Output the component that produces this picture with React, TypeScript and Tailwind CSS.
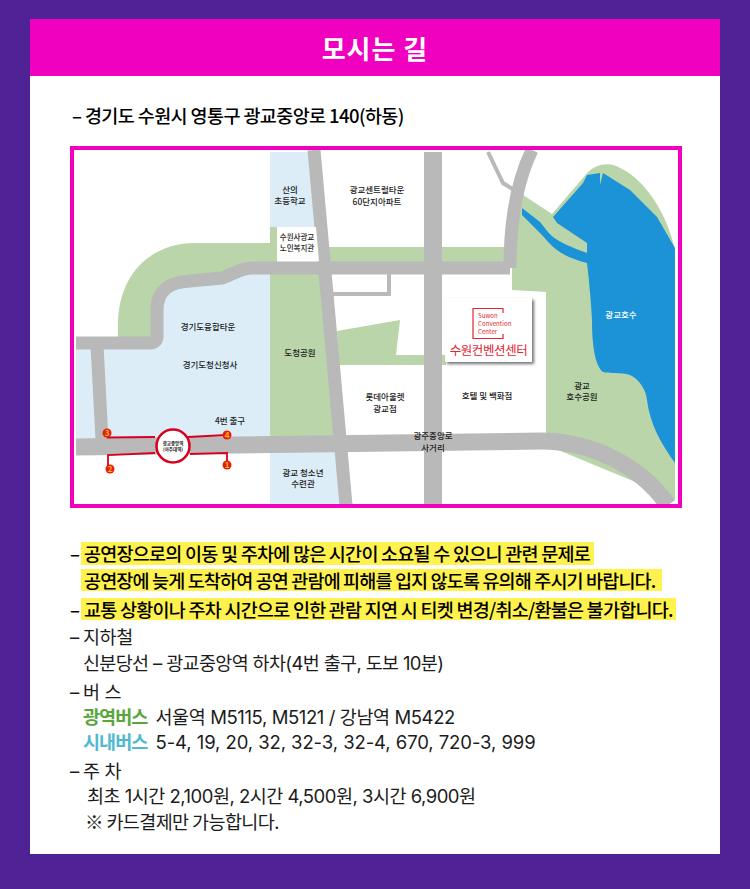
const FONT = { fontFamily: '"Noto Sans CJK KR", "Noto Sans", sans-serif' };
const FONT_LATIN = { fontFamily: 'Inter, "Noto Sans CJK KR", sans-serif' };

const ROAD = "#b9b9b9";
const GREEN = "#b9d5a9";
const SKY = "#dcedf8";
const RED = "#d8001f";

type Label = { x: number; y: number; t: string; size?: number; fill?: string };

const labels: Label[] = [
  { x: 290, y: 193, t: "산의" },
  { x: 290, y: 204, t: "초등학교" },
  { x: 297, y: 240, t: "수원사광교", size: 7.5 },
  { x: 297, y: 251, t: "노인복지관", size: 7.5 },
  { x: 377, y: 193, t: "광교센트럴타운" },
  { x: 377, y: 205, t: "60단지아파트" },
  { x: 208, y: 330, t: "경기도융합타운" },
  { x: 210, y: 368, t: "경기도청신청사" },
  { x: 300, y: 356, t: "도청공원" },
  { x: 230, y: 424, t: "4번 출구" },
  { x: 303, y: 476, t: "광교 청소년" },
  { x: 303, y: 487, t: "수련관" },
  { x: 385, y: 400, t: "롯데아울렛" },
  { x: 385, y: 412, t: "광교점" },
  { x: 487, y: 399, t: "호텔 및 백화점" },
  { x: 433, y: 439, t: "광주중앙로" },
  { x: 433, y: 451, t: "사거리" },
  { x: 582, y: 389, t: "광교" },
  { x: 582, y: 400, t: "호수공원" },
  { x: 621, y: 318, t: "광교호수", fill: "#ffffff" },
];

const exits = [
  { n: "1", x: 227, y: 465 },
  { n: "2", x: 110, y: 469 },
  { n: "3", x: 107, y: 433 },
  { n: "4", x: 227, y: 435 },
];

function RouteMap() {
  return (
    <svg width="612" height="362" viewBox="70 146 612 362" className="block" style={FONT}>
      <defs>
        <filter id="card" x="-10%" y="-10%" width="125%" height="125%">
          <feDropShadow dx="2" dy="2" stdDeviation="1.5" floodColor="#000000" floodOpacity="0.55" />
        </filter>
      </defs>
      <rect x="70" y="146" width="612" height="362" fill="#ffffff" />

      {/* sky blue lots */}
      <rect x="270" y="152" width="46" height="78" fill={SKY} />
      <path d="M76 342 L76 442 L270 438 L270 268 L253 270 L223 283 L177 285 L157 300 L157 342 Z" fill={SKY} />
      <rect x="270" y="450" width="70" height="54" fill={SKY} />

      {/* green areas */}
      <path d="M270 227 L277 227 L277 265 L255 265 L223 275 L190 278 Q160 280 157 310 L157 338 L118 338 L118 325 C118 275 150 243 195 243 L270 243 Z" fill={GREEN} />
      <path d="M270 268 L325 268 L342 438 L270 438 Z" fill={GREEN} />
      <rect x="328" y="247" width="182" height="16" fill={GREEN} />
      <path d="M337 331 L400 320 L396 355 L446 355 L446 365 L339 365 Z" fill={GREEN} />
      <path d="M523 195 L552 214 L588 172 C595 165 610 160 622 169 C645 180 668 215 675 250 L675 500 L650 488 L546 445 L546 292 L512 290 L512 265 C512 235 515 212 523 195 Z" fill={GREEN} />

      {/* lake */}
      <path d="M553 217 L583 183 L587 175 L600 173 L600 185 L603 173 L630 190 L657 217 L675 248 L675 463 C662 445 650 425 647 400 C646 390 640 380 630 375 C620 372 610 374 603 372 C595 366 592 345 592 320 C591 300 589 280 587 263 C575 260 565 256 557 250 C550 245 545 238 540 233 L522 215 L522 208 L540 222 C545 228 548 233 553 237 C560 242 570 247 587 253 L587 243 L557 223 Z" fill="#1b93d6" />

      {/* roads */}
      <g fill="none" stroke={ROAD}>
        <path d="M510 268 L253 268 C240 268 232 275 222 278 L190 281 C170 282 157 290 157 310 L157 336 Q157 343 150 343 L76 343" strokeWidth="13" />
        <path d="M510 268 C510 225 515 185 532 150" strokeWidth="13" />
        <path d="M97 345 L102 440" strokeWidth="13" />
        <path d="M314 150 L346 505" strokeWidth="13" />
        <path d="M433 152 L433 504" strokeWidth="18" />
        <path d="M76 447 L540 441 C590 441 640 465 668 505" strokeWidth="17" />
        <path d="M333 294 L389 294 L389 272" strokeWidth="4" />
        <path d="M488 152 L503 183 L514 190" strokeWidth="4" />
      </g>

      {/* white lot under nursing centre label */}
      <path d="M277 227 L316 227 L319 261 L277 261 Z" fill="#ffffff" />

      {/* convention center */}
      <rect x="445" y="298" width="87" height="64" fill="#ffffff" filter="url(#card)" />
      <path d="M503 313 L503 308.5 L473 308.5 L473 338.5 L503 338.5 L503 334" fill="none" stroke="#e1232e" strokeWidth="1.2" />
      <g fill="#e1232e" fontSize="6" letterSpacing="0.1">
        <text x="478" y="318">Suwon</text>
        <text x="478" y="326">Convention</text>
        <text x="478" y="334">Center</text>
      </g>
      <text x="488.5" y="355" textAnchor="middle" fontSize="12.5" fill="#e1232e" letterSpacing="-0.4">수원컨벤션센터</text>

      {/* subway exits */}
      <g fill="none" stroke={RED} strokeWidth="1.8">
        <path d="M107 437.5 L155 437" />
        <path d="M188 437 L227 435" />
        <path d="M108 468 L108 455 L155 453" />
        <path d="M190 454 L227 453 L227 465" />
      </g>
      <circle cx="173" cy="446" r="16.5" fill="#ffffff" stroke={RED} strokeWidth="2.5" />
      <text x="173" y="445" textAnchor="middle" fontSize="4.5" fontWeight="700" fill="#222222">광교중앙역</text>
      <text x="173" y="451" textAnchor="middle" fontSize="4.5" fontWeight="700" fill="#222222">(아주대역)</text>
      {exits.map((e) => (
        <g key={e.n}>
          <circle cx={e.x} cy={e.y} r="4.5" fill="#e3200f" />
          <text x={e.x} y={e.y + 3} textAnchor="middle" fontSize="8" fontWeight="700" fill="#ffb020">{e.n}</text>
        </g>
      ))}

      {labels.map((l) => (
        <text
          key={l.t}
          x={l.x}
          y={l.y}
          textAnchor="middle"
          fontSize={l.size ?? 8.5}
          fontWeight="500"
          fill={l.fill ?? "#222222"}
        >
          {l.t}
        </text>
      ))}

      <rect x="72" y="148" width="608" height="358" fill="none" stroke="#f000bf" strokeWidth="4" />
    </svg>
  );
}

function Highlight({ children, className }: { children: string; className: string }) {
  return <div className={`bg-[#fff24f] pl-[3px] whitespace-nowrap ${className}`}>{children}</div>;
}

export default function App() {
  return (
    <div className="w-[750px] h-[889px] bg-[#4f2296] pt-[19px] px-[30px] overflow-hidden" style={FONT}>
      <div className="w-[690px] h-[835px] bg-white text-[#1c1c1c]">
        {/* Header */}
        <div className="h-[57px] bg-[#f000bf] flex items-center justify-center">
          <h1 className="text-[26px] font-bold text-white tracking-[1px]">모시는 길</h1>
        </div>

        <div className="pl-10 pt-[26px]">
          {/* Address */}
          <p className="h-[26px] leading-[26px] text-[18.5px] font-medium tracking-[-0.6px] text-black whitespace-nowrap pl-[2px]">
            – 경기도 수원시 영통구 광교중앙로 140(하동)
          </p>

          <div className="mt-[18px]">
            <RouteMap />
          </div>

          {/* Notices */}
          <div className="mt-[34px] text-[18.5px] leading-[23px] font-medium tracking-[-0.75px] text-black">
            <div className="flex">
              <span className="w-[11px]">–</span>
              <div className="flex flex-col gap-[4px]">
                <Highlight className="w-[513px] h-[23px]">공연장으로의 이동 및 주차에 많은 시간이 소요될 수 있으니 관련 문제로</Highlight>
                <Highlight className="w-[581px] h-[22px] tracking-[-0.85px]">공연장에 늦게 도착하여 공연 관람에 피해를 입지 않도록 유의해 주시기 바랍니다.</Highlight>
              </div>
            </div>
            <div className="flex mt-[7px]">
              <span className="w-[11px]">–</span>
              <Highlight className="w-[595px] h-[22px]">교통 상황이나 주차 시간으로 인한 관람 지연 시 티켓 변경/취소/환불은 불가합니다.</Highlight>
            </div>
          </div>

          {/* Directions */}
          <div className="mt-[4px] text-[18.5px] tracking-[-0.4px] text-[#1c1c1c] whitespace-nowrap" style={FONT_LATIN}>
            <div className="leading-[25px]">
              <div className="flex"><span className="w-[13px]">–</span>지하철</div>
              <div className="pl-[13px] pt-px tracking-[-0.65px]">신분당선 – 광교중앙역 하차(4번 출구, 도보 10분)</div>
            </div>
            <div className="leading-[25px] mt-[4px]">
              <div className="flex"><span className="w-[13px]">–</span>버 스</div>
              <div className="pl-[13px] flex gap-[8px]"><b className="text-[#5aa63c] font-bold tracking-[-0.9px]">광역버스</b>서울역 M5115, M5121 / 강남역 M5422</div>
              <div className="pl-[13px] flex gap-[8px] tracking-[-0.08px]"><b className="text-[#4fb9cf] font-bold tracking-[-0.9px]">시내버스</b>5-4, 19, 20, 32, 32-3, 32-4, 670, 720-3, 999</div>
            </div>
            <div className="leading-[25px] mt-[4px]">
              <div className="flex"><span className="w-[13px]">–</span>주 차</div>
              <div className="pl-[17px] tracking-[-0.5px]">최초 1시간 2,100원, 2시간 4,500원, 3시간 6,900원</div>
              <div className="pl-[15px] tracking-[-0.6px]" style={FONT}>※ 카드결제만 가능합니다.</div>
            </div>
          </div>
        </div>
      </div>
    </div>
  );
}
